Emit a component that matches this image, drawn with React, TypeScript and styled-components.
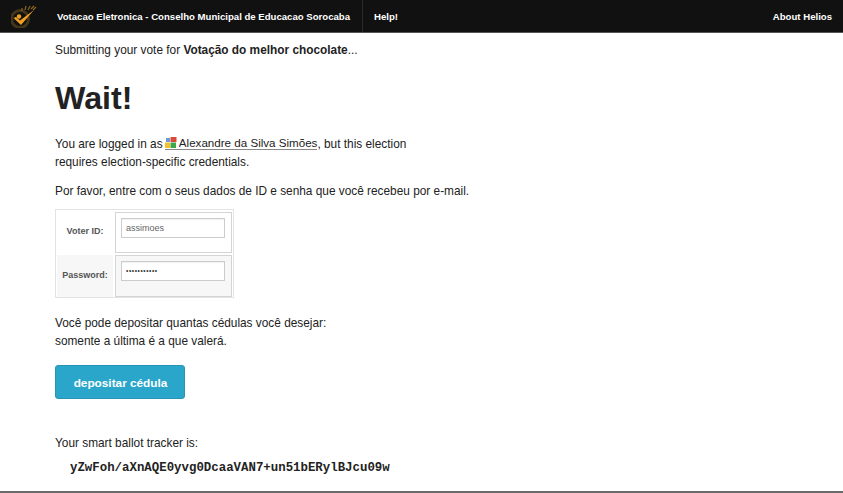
import React from "react";
import styled, { createGlobalStyle } from "styled-components";

const Global = createGlobalStyle`
  html, body { margin: 0; padding: 0; background: #fff; }
  body { font-family: "Liberation Sans", Arial, sans-serif; color: #222; width: 843px; height: 493px; overflow: hidden; }
`;
const Page = styled.div`
  width: 843px; height: 493px; display: flex; flex-direction: column; box-sizing: border-box;
  border-bottom: 2px solid #6a6a6a;
`;
const TopBar = styled.header`
  height: 32px; flex: none; background: #111; border-bottom: 1px solid #555;
  display: flex; align-items: stretch; color: #fff; font-size: 9.6px; font-weight: bold;
`;
const LogoCell = styled.div`
  width: 57px; display: flex; align-items: center; padding-left: 11px; box-sizing: border-box;
`;
const NavItem = styled.a`
  display: flex; align-items: center; padding-right: ${p => (p.$divider ? "12px" : "11px")}; color: #fff;
  border-right: ${p => (p.$divider ? "1px solid #2c2c2c" : "none")};
  margin-right: ${p => (p.$divider ? "11px" : "0")};
`;
const Spacer = styled.div`flex: 1;`;
const Content = styled.main`
  padding: 8px 0 0 55px; font-size: 11.85px; line-height: 18px; display: flex; flex-direction: column; align-items: flex-start;
`;
const Line = styled.p`margin: 0;`;
const Title = styled.h1`
  margin: 17px 0 0; font-size: 32.2px; line-height: 44px; font-weight: bold; color: #222;
`;
const Para = styled.p`margin: ${p => p.$top}px 0 0;`;
const UserLink = styled.a`
  color: #222; border-bottom: 1px solid #888; display: inline-flex; align-items: center; line-height: 13px;
  font-size: 11.6px; margin-left: -1px;
  svg { margin-right: 2px; }
`;
const Table = styled.div`
  margin-top: 9px; width: 179px; height: 89px; box-sizing: border-box; border: 1px solid #e3e3e3;
  display: grid; grid-template-rows: 41px 42px; row-gap: 2px; padding: 2px 1px 0;
`;
const Row = styled.div`
  display: grid; grid-template-columns: 56px 117px; column-gap: 2px; align-items: stretch;
`;
const Label = styled.label`
  font-size: 9px; font-weight: bold; color: #555; display: flex; align-items: center; justify-content: center;
  padding-bottom: 3px; box-sizing: border-box;
  background: ${p => (p.$shade ? "#f7f7f7" : "#fff")};
`;
const InputCell = styled.div`
  border: 1px solid #d4d4d4; background: ${p => (p.$shade ? "#f7f7f7" : "#fff")}; padding: 5px 0 0 5px;
`;
const Field = styled.div`
  width: 104px; height: 20px; box-sizing: border-box; border: 1px solid #ccc; background: #fff;
  font-size: ${p => (p.$dots ? "6.5px" : "9px")}; letter-spacing: ${p => (p.$dots ? "0.6px" : "0")};
  line-height: 18px; padding-left: 4px; color: ${p => (p.$dots ? "#333" : "#666")};
  box-shadow: inset 0 1px 1px rgba(0,0,0,.06);
`;
const SubmitButton = styled.button`
  margin-top: 15px; width: 130px; height: 34px; padding: 1px 0 0 1px; background: #2ba6cb; border: 1px solid #2a94b5;
  border-radius: 3px; color: #fff; font: bold 11.8px "Liberation Sans", Arial, sans-serif;
`;
const Tracker = styled.div`
  margin: 7px 0 0 15px; font-family: "Liberation Mono", monospace; font-weight: bold; font-size: 12.4px; color: #222; line-height: 18px;
`;

const Logo = () => (
  <svg width="26" height="24" viewBox="0 0 26 24">
    <circle cx="9" cy="15" r="8.5" fill="none" stroke="#43351a" strokeWidth="3" />
    <circle cx="8" cy="12.5" r="2.2" fill="#f0a021" />
    <path d="M2.5 14 L5 13 L9 16.5 L23 6 L10 21 Z" fill="#f0a021" />
    <path d="M11 7l0-3M14 6l1-4M17 6l2-4M20 5l3-3M22 6l3-3" stroke="#8a6420" strokeWidth="1.2" />
  </svg>
);
const Gicon = () => (
  <svg width="12" height="11" viewBox="0 0 12 11">
    <rect x="1" y="1" width="4" height="4" fill="#6f9ad8" />
    <rect x="5.5" y="0" width="6" height="5" fill="#d94a38" />
    <rect x="0" y="5.5" width="5" height="5.5" fill="#f2c02e" />
    <rect x="5.5" y="5.5" width="5.5" height="5.5" fill="#3fa64a" />
  </svg>
);

export default function App() {
  return (
    <Page>
      <Global />
      <TopBar>
        <LogoCell><Logo /></LogoCell>
        <NavItem $divider>Votacao Eletronica - Conselho Municipal de Educacao Sorocaba</NavItem>
        <NavItem>Help!</NavItem>
        <Spacer />
        <NavItem>About Helios</NavItem>
      </TopBar>
      <Content>
        <Line>Submitting your vote for <b>Votação do melhor chocolate</b>...</Line>
        <Title>Wait!</Title>
        <Para $top={15}>
          You are logged in as <UserLink><Gicon /> Alexandre da Silva Simões</UserLink>, but this election<br />
          requires election-specific credentials.
        </Para>
        <Para $top={11}>Por favor, entre com o seus dados de ID e senha que você recebeu por e-mail.</Para>
        <Table>
          <Row>
            <Label>Voter ID:</Label>
            <InputCell><Field>assimoes</Field></InputCell>
          </Row>
          <Row>
            <Label $shade>Password:</Label>
            <InputCell $shade><Field $dots>•••••••••••</Field></InputCell>
          </Row>
        </Table>
        <Para $top={16}>Você pode depositar quantas cédulas você desejar:<br />somente a última é a que valerá.</Para>
        <SubmitButton>depositar cédula</SubmitButton>
        <Para $top={35}>Your smart ballot tracker is:</Para>
        <Tracker>yZwFoh/aXnAQE0yvg0DcaaVAN7+un51bERylBJcu09w</Tracker>
      </Content>
    </Page>
  );
}
